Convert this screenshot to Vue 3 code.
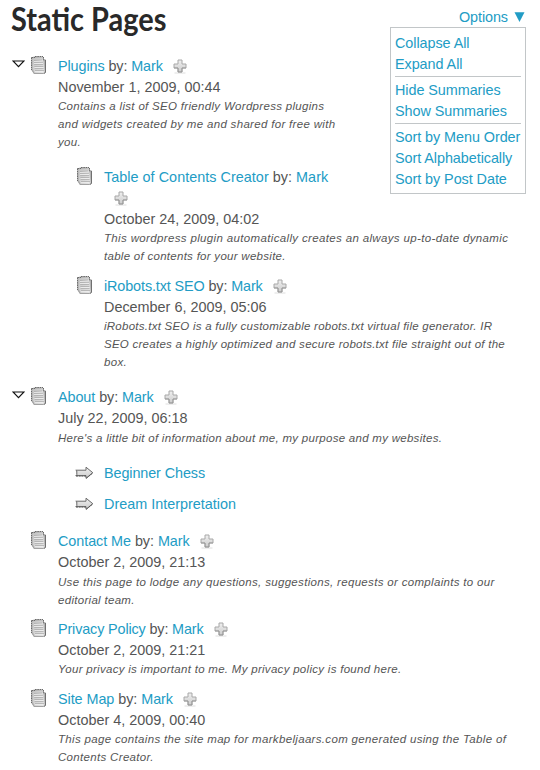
<script setup>
const menu = [
  ['Collapse All', 'Expand All'],
  ['Hide Summaries', 'Show Summaries'],
  ['Sort by Menu Order', 'Sort Alphabetically', 'Sort by Post Date'],
]
// `track` and the second value of each summary line are letter-spacing in px.
const rows = [
  {
    title: 'Plugins', date: 'November 1, 2009, 00:44', open: true, track: -0.1, tight: true,
    summary: [['Contains a list of SEO friendly Wordpress plugins', 0.31], ['and widgets created by me and shared for free with', 0.32], ['you.', 0.3]],
    children: [
      { title: 'Table of Contents Creator', date: 'October 24, 2009, 04:02', wrap: true, track: 0.03, tight: true,
        summary: [['This wordpress plugin automatically creates an always up-to-date dynamic', 0.35], ['table of contents for your website.', 0.28]] },
      { title: 'iRobots.txt SEO', date: 'December 6, 2009, 05:06', track: -0.12, tight: true,
        summary: [['iRobots.txt SEO is a fully customizable robots.txt virtual file generator. IR', 0.25], ['SEO creates a highly optimized and secure robots.txt file straight out of the', 0.26], ['box.', 0.3]] },
    ],
  },
  {
    title: 'About', date: 'July 22, 2009, 06:18', open: true, track: -0.08,
    summary: [["Here's a little bit of information about me, my purpose and my websites.", 0.28]],
    children: [{ title: 'Beginner Chess', link: true, track: -0.1 }, { title: 'Dream Interpretation', link: true, track: 0 }],
  },
  { title: 'Contact Me', date: 'October 2, 2009, 21:13', track: -0.06,
    summary: [['Use this page to lodge any questions, suggestions, requests or complaints to our', 0.32], ['editorial team.', 0.3]] },
  { title: 'Privacy Policy', date: 'October 2, 2009, 21:21', track: -0.14, tight: true,
    summary: [['Your privacy is important to me. My privacy policy is found here.', 0.29]] },
  { title: 'Site Map', date: 'October 4, 2009, 00:40', track: -0.06, tight: true,
    summary: [['This page contains the site map for markbeljaars.com generated using the Table of', 0.33], ['Contents Creator.', 0.32]] },
]
// Flattened so that parents and children share one row template.
const flat = rows.flatMap((r) => [
  { ...r, depth: 0 },
  ...(r.children || []).map((c, i, all) => ({ ...c, depth: 1, first: i === 0, last: i === all.length - 1 })),
])
</script>

<template>
  <svg class="defs" width="0" height="0" aria-hidden="true">
    <defs>
      <linearGradient id="paper" x1="0" y1="0" x2="1" y2="1">
        <stop offset="0" stop-color="#c2c2c2" /><stop offset="1" stop-color="#e6e6e6" />
      </linearGradient>
      <linearGradient id="metal" x1="0" y1="0" x2="0" y2="1">
        <stop offset="0" stop-color="#f0f0f0" /><stop offset="1" stop-color="#cccccc" />
      </linearGradient>
      <symbol id="pages" viewBox="0 0 18 20">
        <path d="M1.5 2.5L4 1.5h8l1.5 2 2 1.5v12.5L13.5 19H4L1.5 15z" fill="#b4b4b4" />
        <path d="M2.5 3.2l10-.7 1 2.5 1 11.5-1 1.5-9-.3L3 14z" fill="url(#paper)" />
        <path d="M1.5 2.5v12.5M1.5 2.5H5M5 1.5h8M13.5 2v3h2" fill="none" stroke="#6a6a6a" stroke-dasharray="1.6 .7" />
        <path d="M15.5 5v12.5L14 18.5" fill="none" stroke="#707070" />
        <path d="M2 15l2 3.5h9.5" fill="none" stroke="#a0a0a0" stroke-width=".9" />
        <path d="M4 5.5l8-.5M4 7.5l9-.3M4.2 9.5h9M4.4 11.5h9M4.6 13.5h9M5 15.5h9" stroke="#a0a0a0" stroke-width=".6" />
        <path d="M4 6.5l9-.5M4 8.5h9M4.5 12.5h9M5 16.7h8" stroke="#fafafa" stroke-width=".6" />
      </symbol>
      <symbol id="plus" viewBox="0 0 14 15">
        <path d="M1.5 14h11" stroke="#dedede" />
        <path d="M5 1h4v4h4v4H9v4H5V9H1V5h4z" fill="url(#metal)" stroke="#a8a8a8" stroke-linejoin="round" />
        <path d="M1 9h4v4h4V9h4" fill="none" stroke="#909090" stroke-width=".7" />
      </symbol>
      <symbol id="arrow" viewBox="0 0 19 14">
        <path d="M.8 4.2H11V1.2L17.8 6.7 11 12.3V9.6H.8l1-1V5z" fill="url(#metal)" stroke="#6a6a6a" />
        <path d="M1 10.1h10M11.3 12.3L17.8 7" stroke="#444" stroke-width=".8" stroke-dasharray="2 .7" />
      </symbol>
    </defs>
  </svg>
  <main class="page">
    <header class="head">
      <h1 class="heading">Static Pages</h1>
      <div class="options">
        <a class="toggle">Options <svg class="caret" viewBox="0 0 10 10"><path d="M0 .2h10L5 10z" fill="#229cc5" /></svg></a>
        <div class="menu">
          <div v-for="(group, i) in menu" :key="i" class="group">
            <a v-for="m in group" :key="m">{{ m }}</a>
          </div>
        </div>
      </div>
    </header>
    <section class="list">
      <article v-for="r in flat" :key="r.title" class="row" :class="{ child: r.depth, first: r.first, last: r.last }">
        <div class="twist">
          <svg v-if="r.open" width="13" height="8" viewBox="0 0 13 8"><path d="M1 1h11L6.5 6.7z" fill="#fff" stroke="#111" stroke-width="1.2" /></svg>
        </div>
        <div class="icon">
          <svg v-if="r.link" class="arrow" width="19" height="14"><use href="#arrow" /></svg>
          <svg v-else width="18" height="20"><use href="#pages" /></svg>
        </div>
        <div class="body">
          <div class="line" :style="{ letterSpacing: r.track + 'px' }">
            <a>{{ r.title }}</a><template v-if="!r.link"> by: <a>Mark</a><br v-if="r.wrap"><svg class="plus" width="14" height="15"><use href="#plus" /></svg></template>
          </div>
          <template v-if="!r.link">
            <div class="line date">{{ r.date }}</div>
            <div class="summary" :class="{ tight: r.tight }">
              <div v-for="[text, track] in r.summary" :key="text" :style="{ letterSpacing: track + 'px' }">{{ text }}</div>
            </div>
          </template>
        </div>
      </article>
    </section>
  </main>
</template>

<style>
body { margin: 0; background: #fff; overflow: hidden; }
</style>
<style scoped>
.defs { position: absolute; }
.page { width: 540px; height: 770px; overflow: hidden; font: 14.4px/21px "Liberation Sans", Arial, sans-serif; color: #555; }
a { color: #229cc5; }
.head { display: flex; justify-content: space-between; height: 56px; padding: 0 14px 0 11px; }
.heading { margin: 0; font: 700 33px/36px Lato, sans-serif; color: #292929; white-space: nowrap; transform: scaleX(.877); transform-origin: left; }
.options { position: relative; padding-top: 6.5px; }
.toggle { display: flex; align-items: center; gap: 6px; letter-spacing: -.08px; }
.caret { width: 11px; height: 10px; margin-right: 1px; }
.menu { position: absolute; right: 0; top: 27px; width: 126px; padding: 5px 4px 3px; border: 1px solid #c2c6c8; background: #fff; letter-spacing: -.06px; }
.group a { display: block; white-space: nowrap; }
.group + .group { margin-top: 1px; padding-top: 3px; border-top: 1px solid #c2c6c8; }
.row { display: flex; margin-bottom: 10px; padding-left: 12px; }
.row:has(+ .first) { margin-bottom: 15px; }
.row.child { padding-left: 58px; }
.row.last { margin-bottom: 15px; }
.row:has(.date):has(+ .first .arrow), .row.last:has(.arrow) { margin-bottom: 16px; }
.twist { width: 18px; padding-top: 4px; line-height: 0; }
.child .twist { display: none; }
.icon { width: 28px; line-height: 0; }
.child .icon { padding-left: 18px; }
.icon svg { display: block; margin-top: -1px; }
.icon .arrow { margin: 3px 0 0 -1px; }
.line { white-space: nowrap; }
.plus { margin-left: 10px; vertical-align: -3px; }
.summary { font-size: 11.5px; line-height: 18px; font-style: italic; white-space: nowrap; }
.tight { margin-top: -1px; padding-bottom: 1px; }
</style>
